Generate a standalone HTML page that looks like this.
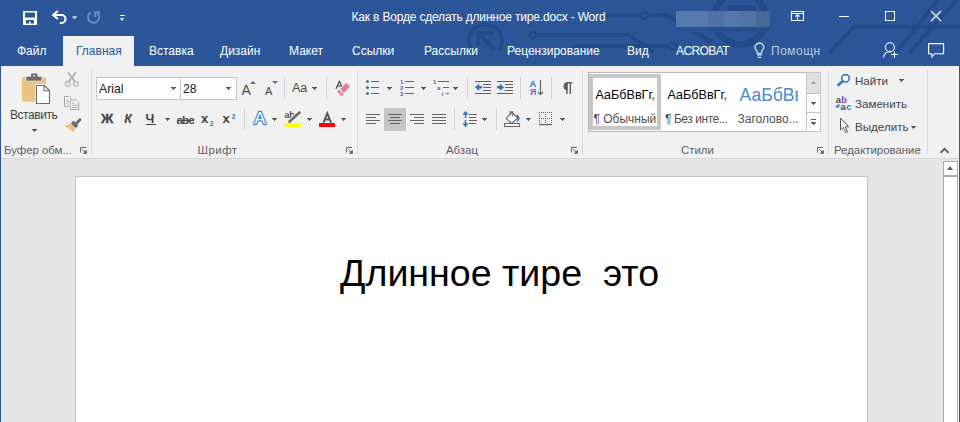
<!DOCTYPE html>
<html><head><meta charset="utf-8">
<style>
*{margin:0;padding:0;box-sizing:border-box}
html,body{width:960px;height:422px;overflow:hidden;background:#e6e6e6;font-family:"Liberation Sans",sans-serif}
.a{position:absolute;white-space:nowrap}
#title{position:absolute;left:0;top:0;width:960px;height:66px;background:#2b579a;overflow:hidden}
.tab{position:absolute;top:44px;font-size:12px;color:#fff;line-height:14px}
#ribbon{position:absolute;left:0;top:66px;width:960px;height:93px;background:#f1f1f1;border-bottom:1px solid #d6d6d6}
.sep{position:absolute;width:1px;background:#dadada}
.gl{position:absolute;top:144px;font-size:11.4px;color:#5e5e5e;line-height:13px}
.lbl{position:absolute;font-size:11.5px;color:#444;line-height:13px}
.dd{position:absolute;width:5px;height:3px;background:linear-gradient(#5a5a5a,#5a5a5a) 0 0/5px 1px no-repeat,linear-gradient(#5a5a5a,#5a5a5a) 1px 1px/3px 1px no-repeat,linear-gradient(#5a5a5a,#5a5a5a) 2px 2px/1px 1px no-repeat}
#doc{position:absolute;left:1px;top:159px;width:958px;height:263px;background:#e6e6e6}
#page{position:absolute;left:75px;top:176px;width:793px;height:260px;background:#fff;border:1px solid #c3c3c3}
</style></head><body>
<div id="title">
<svg class="a" style="left:0;top:0" width="960" height="66" viewBox="0 0 960 66">
 <defs><clipPath id="cp"><rect x="0" y="0" width="960" height="53"/></clipPath></defs>
 <g fill="none" stroke="#234b8a" stroke-width="4" clip-path="url(#cp)">
  <path d="M472 50.5A16.5 16.5 0 1 1 498.5 51"/>
  <path d="M478.2 45.8V33.2H493.5 M478.2 33.2L495 49.5" stroke-width="4.3"/>
  <path d="M536 35H629L654 53"/>
  <circle cx="533" cy="35" r="3.2" stroke-width="2.6"/>
  <path d="M605 15.6H641 M648 15.6H668L712 42"/>
  <circle cx="644.5" cy="15.6" r="3.3" stroke-width="2.6"/>
  <path d="M660 15H665L712 43"/>
  <path d="M566 53L576 46.2H669"/>
  <circle cx="673" cy="46.2" r="3.5" stroke-width="2.6"/>
  <circle cx="740" cy="18.5" r="26" stroke-width="6.5"/>
  <path d="M728 8H756" stroke-width="6"/>
  <path d="M960 26.6H854L829 53"/>
  <path d="M938 0L896 53 M957 0L909 53"/>
 </g>
</svg>
<!-- save -->
<svg class="a" style="left:22px;top:10px" width="16" height="16" viewBox="0 0 16 16">
 <path fill="#fff" fill-rule="evenodd" d="M1 1H15V15H1Z M3 2.5H13V7.5H3Z M4 10H12V13.5H8.5V11.5H7V13.5H4Z"/>
</svg>
<!-- undo -->
<svg class="a" style="left:48px;top:6px" width="34" height="22" viewBox="48 6 34 22">
 <path d="M55 15H61.5A4 4 0 0 1 61.5 23H59.8" fill="none" stroke="#fff" stroke-width="2"/>
 <path d="M57.8 11L53.2 15L57.8 19" fill="none" stroke="#fff" stroke-width="2.2"/>
 <path d="M72 16.5H77L74.5 19Z" fill="#fff"/>
</svg>
<!-- redo disabled -->
<svg class="a" style="left:84px;top:6px" width="20" height="22" viewBox="84 6 20 22">
 <path d="M97.5 13.2A5.6 5.6 0 1 1 91 12.2" fill="none" stroke="#6b8cc2" stroke-width="2"/>
 <path d="M95.3 17V12.3H100.3" fill="none" stroke="#6b8cc2" stroke-width="2"/>
</svg>
<!-- customize -->
<div class="a" style="left:120px;top:15px;width:5px;height:1px;background:#fff"></div>
<div class="a" style="left:120px;top:18px;width:0;height:0;border-left:2.5px solid transparent;border-right:2.5px solid transparent;border-top:3px solid #fff"></div>
<div class="a" style="left:351.5px;top:9.7px;font-size:12px;letter-spacing:-0.18px;color:#fff;line-height:14px">Как в Ворде сделать длинное тире.docx - Word</div>
<!-- blurred username -->
<div class="a" style="left:676px;top:11px;width:16px;height:16px;background:#587aae"></div>
<div class="a" style="left:676px;top:27px;width:16px;height:5px;background:#2a5393"></div>
<div class="a" style="left:692px;top:11px;width:16px;height:16px;background:#5779ad"></div>
<div class="a" style="left:692px;top:27px;width:16px;height:5px;background:#2a5597"></div>
<div class="a" style="left:708px;top:11px;width:16px;height:16px;background:#5272a7"></div>
<div class="a" style="left:708px;top:27px;width:16px;height:5px;background:#27508f"></div>
<div class="a" style="left:724px;top:11px;width:16px;height:16px;background:#5677ac"></div>
<div class="a" style="left:724px;top:27px;width:16px;height:5px;background:#27508f"></div>
<div class="a" style="left:740px;top:11px;width:16px;height:16px;background:#5273a6"></div>
<div class="a" style="left:740px;top:27px;width:16px;height:5px;background:#27508f"></div>
<div class="a" style="left:756px;top:11px;width:14px;height:16px;background:#486899"></div>
<div class="a" style="left:756px;top:27px;width:14px;height:5px;background:#27508f"></div>
<!-- ribbon display options -->
<svg class="a" style="left:788px;top:8px" width="20" height="16" viewBox="788 8 20 16">
 <path d="M791.5 11.5H803.5V20.5H791.5Z M791.5 13.5H803.5 M797.5 14V20.5 M795.3 16.7L797.5 14.5L799.7 16.7" fill="none" stroke="#fff" stroke-width="1.1"/>
</svg>
<div class="a" style="left:839px;top:16px;width:10px;height:1px;background:#fff"></div>
<div class="a" style="left:885px;top:11px;width:10px;height:10px;border:1px solid #fff"></div>
<svg class="a" style="left:930px;top:10px" width="12" height="12" viewBox="0 0 12 12">
 <path d="M1 1L11 11M11 1L1 11" stroke="#fff" stroke-width="1.1"/>
</svg>
<!-- tabs -->
<div class="a" style="left:63px;top:36px;width:71px;height:30px;background:#f1f1f1"></div>
<div class="tab" style="left:17px">Файл</div>
<div class="tab" style="left:76px;color:#2b579a">Главная</div>
<div class="tab" style="left:149px">Вставка</div>
<div class="tab" style="left:220px">Дизайн</div>
<div class="tab" style="left:289px">Макет</div>
<div class="tab" style="left:352px">Ссылки</div>
<div class="tab" style="left:424px">Рассылки</div>
<div class="tab" style="left:507px">Рецензирование</div>
<div class="tab" style="left:627px">Вид</div>
<div class="tab" style="left:676px;letter-spacing:-0.6px">ACROBAT</div>
<svg class="a" style="left:750px;top:41px" width="20" height="20" viewBox="750 40 20 20">
 <path d="M757.3 52.5V51C757.3 49.5 755 48.5 755 46.5A4.4 4.4 0 0 1 763.8 46.5C763.8 48.5 761.5 49.5 761.5 51V52.5Z" fill="none" stroke="#fff" stroke-width="1.1"/>
 <path d="M757 54H761.8 M757.6 56.2H761.2" stroke="#fff" stroke-width="1.1"/>
</svg>
<div class="tab" style="left:771px;color:#bccbe2;letter-spacing:0.5px">Помощн</div>
<!-- share -->
<svg class="a" style="left:878px;top:38px" width="70" height="24" viewBox="878 38 70 24">
 <circle cx="889.9" cy="47.2" r="4.5" fill="none" stroke="#fff" stroke-width="1.1"/>
 <path d="M883.4 57.5C884 54 886.5 51.8 890 51.8C890.5 51.8 891 51.85 891.5 51.95" fill="none" stroke="#fff" stroke-width="1.1"/>
 <path d="M894.5 51.5V57.8 M891.3 54.5H897.8" stroke="#fff" stroke-width="1.1"/>
 <!-- comments -->
 <path d="M928.6 43.6H943.6V53.8H934.5L931.6 56.8V53.8H928.6Z" fill="none" stroke="#fff" stroke-width="1.1"/>
</svg>
</div>
<div id="ribbon"></div>
<!-- separators -->
<div class="sep" style="left:91px;top:70px;height:84px"></div>
<div class="sep" style="left:357px;top:70px;height:84px"></div>
<div class="sep" style="left:582px;top:70px;height:84px"></div>
<div class="sep" style="left:828px;top:70px;height:84px"></div>
<div class="sep" style="left:927px;top:70px;height:84px"></div>
<!-- group labels -->
<div class="gl" style="left:4px">Буфер обм...</div>
<div class="gl" style="left:197.5px;letter-spacing:0.5px">Шрифт</div>
<div class="gl" style="left:446px">Абзац</div>
<div class="gl" style="left:681px">Стили</div>
<div class="gl" style="left:834px">Редактирование</div>
<svg class="a" style="left:79px;top:146px" width="9" height="9" viewBox="0 0 9 9"><path d="M1.5 6.5V1.5H7" fill="none" stroke="#666" stroke-width="1"/><path d="M7.8 3.8V7.8H3.8Z" fill="#555"/><path d="M3.5 3.5L6 6" stroke="#555" stroke-width="1"/></svg>
<svg class="a" style="left:345px;top:146px" width="9" height="9" viewBox="0 0 9 9"><path d="M1.5 6.5V1.5H7" fill="none" stroke="#666" stroke-width="1"/><path d="M7.8 3.8V7.8H3.8Z" fill="#555"/><path d="M3.5 3.5L6 6" stroke="#555" stroke-width="1"/></svg>
<svg class="a" style="left:570px;top:146px" width="9" height="9" viewBox="0 0 9 9"><path d="M1.5 6.5V1.5H7" fill="none" stroke="#666" stroke-width="1"/><path d="M7.8 3.8V7.8H3.8Z" fill="#555"/><path d="M3.5 3.5L6 6" stroke="#555" stroke-width="1"/></svg>
<svg class="a" style="left:816px;top:146px" width="9" height="9" viewBox="0 0 9 9"><path d="M1.5 6.5V1.5H7" fill="none" stroke="#666" stroke-width="1"/><path d="M7.8 3.8V7.8H3.8Z" fill="#555"/><path d="M3.5 3.5L6 6" stroke="#555" stroke-width="1"/></svg>
<svg class="a" style="left:938px;top:145.7px" width="12" height="9" viewBox="0 0 12 9"><path d="M2.6 6.8L6.5 2.9L10.4 6.8" fill="none" stroke="#606060" stroke-width="2"/></svg>

<!-- CLIPBOARD -->
<svg class="a" style="left:18px;top:70px" width="36" height="37" viewBox="18 70 36 37">
 <path d="M22 78A1 1 0 0 1 23 77H45A1 1 0 0 1 46 78V101.7H24.5A2.5 2.5 0 0 1 22 99.2Z" fill="#ebc47e"/>
 <path d="M26 76.2H42V80A1.2 1.2 0 0 1 40.8 81.2H27.2A1.2 1.2 0 0 1 26 80Z" fill="#6d6d6d" stroke="#f1f1f1" stroke-width="0.8"/>
 <path d="M31 74.2A1 1 0 0 1 32 73.6H36.4A1 1 0 0 1 37.4 74.2V77H31Z" fill="#6d6d6d"/>
 <rect x="33.4" y="75" width="1.6" height="1.6" fill="#f1f1f1"/>
 <path d="M36.3 85.3H44.3L49.7 90.5V103.7H36.3Z" fill="#fff" stroke="#f1f1f1" stroke-width="2.6"/>
 <path d="M36.5 85.5H44.3L49.5 90.6V103.5H36.5Z M44 85.8V90.8H49.2" fill="#fff" stroke="#6d6d6d" stroke-width="1.1" stroke-linejoin="miter"/>
</svg>
<div class="lbl" style="left:10px;top:109.3px;font-size:12px;letter-spacing:-0.45px">Вставить</div>
<div class="dd" style="left:32px;top:129px"></div>
<!-- cut -->
<svg class="a" style="left:62px;top:70px" width="20" height="19" viewBox="62 70 20 19">
 <g fill="none" stroke="#b3b3b3">
  <circle cx="67.7" cy="83.8" r="2.4" stroke-width="1.2"/><circle cx="76" cy="83.8" r="2.4" stroke-width="1.2"/>
  <path d="M68.8 81.6L75.8 72.3 M74.9 81.6L67.9 72.3" stroke-width="1.9"/>
 </g>
</svg>
<!-- copy -->
<svg class="a" style="left:62px;top:94px" width="20" height="18" viewBox="62 94 20 18">
 <path d="M64.5 96.5H69.5L71.5 98.5V106.5H64.5Z" fill="#fff" stroke="#a3a3a3" stroke-width="1"/>
 <path d="M70.5 100H76L78.5 102.5V109.5H70.5Z" fill="#fff" stroke="#f1f1f1" stroke-width="2"/>
 <path d="M70.5 100H76L78.5 102.5V109.5H70.5Z" fill="#fff" stroke="#a3a3a3" stroke-width="1"/>
 <path d="M66 99.5H68.5 M66 101.8H69.5 M66 104H69 M72 103H75 M72 105.3H77 M72 107.5H77" stroke="#a3a3a3" stroke-width="1"/>
</svg>
<!-- format painter -->
<svg class="a" style="left:62px;top:116px" width="20" height="18" viewBox="62 116 20 18">
 <path d="M80 119.8L77 122.8" stroke="#6d6d6d" stroke-width="2.8" stroke-linecap="round"/>
 <path d="M78.4 125.4L73.6 120.6L70.8 123.4L75.6 128.2Z" fill="#6d6d6d"/>
 <path d="M70.4 123.8L75.2 128.6L73.4 132.3L64.2 125.4Z" fill="#ebc47e"/>
</svg>
<!-- FONT -->
<div class="a" style="left:96px;top:77px;width:141px;height:23px;background:#fff;border:1px solid #c6c6c6"></div>
<div class="a" style="left:180px;top:77px;width:1px;height:23px;background:#c6c6c6"></div>
<div class="lbl" style="left:99px;top:83px;font-size:12.2px;color:#222">Arial</div>
<div class="dd" style="left:171px;top:87px"></div>
<div class="lbl" style="left:183px;top:83px;font-size:12.2px;color:#222">28</div>
<div class="dd" style="left:226px;top:87px"></div>
<div class="sep" style="left:284px;top:77px;height:22px;background:#d4d4d4"></div>
<div class="sep" style="left:326px;top:77px;height:22px;background:#d4d4d4"></div>
<div class="lbl" style="left:241.5px;top:83.5px;font-size:14px;color:#4a4a4a">A</div>
<div class="a" style="left:250px;top:81px;width:0;height:0;border-left:3px solid transparent;border-right:3px solid transparent;border-bottom:3px solid #2e75b6"></div>
<div class="lbl" style="left:265px;top:84.5px;font-size:11px;color:#4a4a4a">A</div>
<div class="a" style="left:272px;top:81px;width:0;height:0;border-left:3px solid transparent;border-right:3px solid transparent;border-top:3px solid #2e75b6"></div>
<div class="lbl" style="left:292px;top:82px;font-size:12.5px;color:#4a4a4a">Aa</div>
<div class="dd" style="left:312px;top:87px"></div>
<svg class="a" style="left:330px;top:76px" width="26" height="22" viewBox="330 76 26 22">
 <path d="M336 88.8L339.4 81.3L342 86.5 M337.5 86H341" fill="none" stroke="#3a3a3a" stroke-width="1.1"/>
 <path d="M346.2 82.6L350.3 86.7L343.8 93.2L339.7 89.1Z" fill="#e57e92" stroke="#f1f1f1" stroke-width="0.8"/>
 <path d="M338.8 89.8L343.6 94.6L341.9 96.2L337.1 91.4Z" fill="#e57e92"/>
</svg>

<div class="lbl" style="left:100.9px;top:111.8px;font-size:13.6px;font-weight:bold;color:#444;-webkit-text-stroke:0.3px #444">Ж</div>
<div class="lbl" style="left:124.3px;top:112.5px;font-size:12.5px;font-weight:bold;font-style:italic;color:#444">К</div>
<div class="lbl" style="left:145.5px;top:112.5px;font-size:12.5px;font-weight:bold;color:#444">Ч</div>
<div class="a" style="left:146px;top:124px;width:10px;height:1px;background:#444"></div>
<div class="dd" style="left:165px;top:118px"></div>
<div class="lbl" style="left:176.5px;top:112.5px;font-size:11.6px;font-weight:bold;color:#4a4a4a;letter-spacing:-0.9px">abc</div>
<div class="a" style="left:177px;top:119.5px;width:17px;height:1.2px;background:#4a4a4a"></div>
<div class="lbl" style="left:201px;top:112px;font-size:13px;font-weight:bold;color:#444">x</div>
<div class="lbl" style="left:209.8px;top:116.8px;font-size:6.5px;font-weight:bold;color:#2e75b6">2</div>
<div class="lbl" style="left:222.5px;top:112px;font-size:13px;font-weight:bold;color:#444">x</div>
<div class="lbl" style="left:231.8px;top:109.5px;font-size:6.5px;font-weight:bold;color:#2e75b6">2</div>
<div class="sep" style="left:244px;top:108px;height:22px;background:#d4d4d4"></div>
<svg class="a" style="left:248px;top:106px" width="92" height="24" viewBox="248 106 92 24">
 <text x="254.2" y="124.3" font-family="Liberation Sans" font-size="16.8" fill="#fff" stroke="#c5d8ef" stroke-width="3.6" paint-order="stroke" stroke-linejoin="round">A</text>
 <text x="254.2" y="124.3" font-family="Liberation Sans" font-size="16.8" fill="#fff" stroke="#3f7cc6" stroke-width="2" paint-order="stroke" stroke-linejoin="round">A</text>
 <text x="284.6" y="117.6" font-family="Liberation Sans" font-weight="bold" font-size="9" fill="#505050" letter-spacing="-0.3">ab</text>
 <path d="M289.5 121.5L299.5 112.5" stroke="#f1f1f1" stroke-width="4.5"/>
 <path d="M289.5 121.5L299.5 112.5" stroke="#6a6a6a" stroke-width="2.6" stroke-linecap="round"/>
 <path d="M288 123L290 120.5L291 121.6Z" fill="#6a6a6a"/>
 <rect x="285" y="123" width="16" height="4" fill="#ffff00"/>
 <path d="M323.5 122.7L327.3 113.3L331.1 122.7 M324.8 119.5H329.8" fill="none" stroke="#555" stroke-width="1.9"/>
 <rect x="319" y="123" width="16" height="4" fill="#f00"/>
</svg>
<div class="dd" style="left:272px;top:118px"></div>
<div class="dd" style="left:307px;top:118px"></div>
<div class="dd" style="left:341px;top:118px"></div>


<!-- PARAGRAPH -->
<svg class="a" style="left:364px;top:78px" width="100" height="20" viewBox="364 78 100 20">
 <g fill="#2e75b6">
  <circle cx="367.5" cy="81.5" r="1.5"/><circle cx="367.5" cy="87.5" r="1.5"/><circle cx="367.5" cy="93.5" r="1.5"/>
 </g>
 <path d="M371 81.5H379 M371 87.5H379 M371 93.5H379" stroke="#636363" stroke-width="1.2"/>
 <g font-family="Liberation Sans" font-weight="bold" font-size="6" fill="#2e75b6">
  <text x="400" y="84">1</text><text x="400" y="90">2</text><text x="400" y="96">3</text>
  <text x="433" y="84">1</text><text x="437" y="90">a</text><text x="441.5" y="96">i</text>
 </g>
 <path d="M405 81.5H414 M405 87.5H414 M405 93.5H414 M438 81.5H449 M443 87.5H449 M446 93.5H449" stroke="#636363" stroke-width="1.2"/>
</svg>
<div class="dd" style="left:387px;top:87px"></div>
<div class="dd" style="left:421px;top:87px"></div>
<div class="dd" style="left:453px;top:87px"></div>
<div class="sep" style="left:467px;top:77px;height:22px;background:#d4d4d4"></div>
<svg class="a" style="left:472px;top:78px" width="110" height="20" viewBox="472 78 110 20">
 <path d="M475 81.5H491 M483 84.5H491 M483 87.5H491 M483 90.5H491 M475 93.5H491 M497 81.5H513 M505 84.5H513 M505 87.5H513 M505 90.5H513 M497 93.5H513" stroke="#5f5f5f" stroke-width="1.1"/>
 <path d="M478.5 87.2H482 M497 87.2H500.5" stroke="#3474bc" stroke-width="2.6"/>
 <path d="M475 87.2L479.2 83.5V91Z M504 87.2L499.8 83.5V91Z" fill="#3474bc"/>
 <text x="529.6" y="86.8" font-family="Liberation Sans" font-weight="bold" font-size="9.3" fill="#3474bc">A</text>
 <text x="530" y="94.8" font-family="Liberation Sans" font-weight="bold" font-size="8.8" fill="#8a5cbf">Я</text>
 <path d="M540.5 80V94.5 M538 92L540.5 94.5L543 92" fill="none" stroke="#5f5f5f" stroke-width="1.1"/>
 <path d="M566.3 82.7H572.2 M567 82.7V94 M570.3 82.7V94" fill="none" stroke="#5f5f5f" stroke-width="1.4"/>
 <path d="M567.5 82.2A4 4 0 0 0 567.5 90.2Z" fill="#5f5f5f"/>
</svg>
<div class="sep" style="left:520px;top:77px;height:22px;background:#d4d4d4"></div>
<div class="sep" style="left:551px;top:77px;height:22px;background:#d4d4d4"></div>
<!-- row 2 -->
<div class="a" style="left:384px;top:108px;width:22px;height:23px;background:#c5c5c5"></div>
<svg class="a" style="left:364px;top:108px" width="120" height="22" viewBox="364 108 120 22">
 <path d="M366 114.5H380 M366 117.5H376 M366 120.5H380 M366 123.5H376
          M388 114.5H402 M390 117.5H400 M388 120.5H402 M390 123.5H400
          M410 114.5H424 M414 117.5H424 M410 120.5H424 M414 123.5H424
          M432 114.5H446 M432 117.5H446 M432 120.5H446 M432 123.5H446
          M469 114.5H477 M469 117.5H476 M469 120.5H477 M469 123.5H476" stroke="#636363" stroke-width="1.2"/>
 <path d="M465.5 114V118 M465.5 120V124.5" stroke="#3474bc" stroke-width="1.5"/>
 <path d="M465.5 110.8L468.6 114.8H462.4Z M465.5 127.2L468.6 123.2H462.4Z" fill="#3474bc"/>
</svg>
<div class="dd" style="left:482px;top:118px"></div>
<div class="sep" style="left:454px;top:108px;height:22px;background:#d4d4d4"></div>
<div class="sep" style="left:496px;top:108px;height:22px;background:#d4d4d4"></div>
<svg class="a" style="left:500px;top:106px" width="24" height="26" viewBox="500 106 24 26">
 <path d="M506.2 118.3L512 112.5L517.9 118L511.5 123.5Z" fill="#fff" stroke="#6a6a6a" stroke-width="1.1" stroke-linejoin="round"/>
 <path d="M510 114.5V111.7H512.8V116.5" fill="none" stroke="#6a6a6a" stroke-width="1.1"/>
 <path d="M516.8 114.8C519.5 115.5 521 118.5 517.6 122.5L516.8 122C518 119.5 517.8 117.5 516.3 116.2Z" fill="#3474bc"/>
 <rect x="504.5" y="123.5" width="15" height="3" fill="#fff" stroke="#6a6a6a" stroke-width="1.1"/>
</svg>
<div class="dd" style="left:526px;top:118px"></div>
<svg class="a" style="left:536px;top:108px" width="20" height="20" viewBox="536 108 20 20"><g fill="#5f5f5f"><rect x="539" y="112" width="1" height="1"/><rect x="539" y="118" width="1" height="1"/><rect x="541" y="112" width="1" height="1"/><rect x="541" y="118" width="1" height="1"/><rect x="543" y="112" width="1" height="1"/><rect x="543" y="118" width="1" height="1"/><rect x="545" y="112" width="1" height="1"/><rect x="545" y="118" width="1" height="1"/><rect x="547" y="112" width="1" height="1"/><rect x="547" y="118" width="1" height="1"/><rect x="549" y="112" width="1" height="1"/><rect x="549" y="118" width="1" height="1"/><rect x="551" y="112" width="1" height="1"/><rect x="551" y="118" width="1" height="1"/><rect x="539" y="114" width="1" height="1"/><rect x="539" y="116" width="1" height="1"/><rect x="539" y="120" width="1" height="1"/><rect x="539" y="122" width="1" height="1"/><rect x="545" y="114" width="1" height="1"/><rect x="545" y="116" width="1" height="1"/><rect x="545" y="120" width="1" height="1"/><rect x="545" y="122" width="1" height="1"/><rect x="551" y="114" width="1" height="1"/><rect x="551" y="116" width="1" height="1"/><rect x="551" y="120" width="1" height="1"/><rect x="551" y="122" width="1" height="1"/></g><rect x="539" y="124" width="13" height="1.2" fill="#5f5f5f"/></svg>
<div class="dd" style="left:560px;top:118px"></div>

<!-- STYLES -->
<div class="a" style="left:588px;top:72px;width:233px;height:60px;background:#fff;border:1px solid #bababa"></div>
<div class="a" style="left:589px;top:74px;width:72px;height:56px;border:4px solid #c6c6c6"></div>
<div class="lbl" style="left:595.5px;top:88.5px;font-size:12.6px;color:#000">АаБбВвГг<span style="color:#6e0a0a">,</span></div>
<div class="lbl" style="left:593.5px;top:113px;font-size:12px;color:#505050">¶ Обычный</div>
<div class="lbl" style="left:667.5px;top:88.5px;font-size:12.6px;color:#000">АаБбВвГг<span style="color:#6e0a0a">,</span></div>
<div class="lbl" style="left:665px;top:113px;font-size:12px;letter-spacing:-0.45px;color:#505050">¶ Без инте...</div>
<div class="a" style="left:739px;top:82px;width:59px;height:22px;overflow:hidden"><span class="lbl" style="left:0.5px;top:3px;font-size:17.6px;line-height:20px;color:#4a8ad2">АаБбВв</span></div>
<div class="lbl" style="left:737.5px;top:113px;font-size:12px;color:#505050">Заголово...</div>
<div class="a" style="left:806px;top:72px;width:15px;height:60px;background:#fff;border:1px solid #c6c6c6"></div>
<div class="a" style="left:807px;top:73px;width:13px;height:20px;background:#e0e0e0"></div>
<div class="a" style="left:806px;top:93px;width:15px;height:1px;background:#c6c6c6"></div>
<div class="a" style="left:806px;top:112px;width:15px;height:1px;background:#c6c6c6"></div>
<div class="dd" style="left:811px;top:81px;transform:rotate(180deg);filter:opacity(0.45)"></div>
<div class="dd" style="left:811px;top:102px"></div>
<div class="a" style="left:811px;top:119px;width:5px;height:1px;background:#5a5a5a"></div>
<div class="dd" style="left:811px;top:122px"></div>

<!-- EDITING -->
<svg class="a" style="left:834px;top:72px" width="18" height="16" viewBox="834 72 18 16">
 <circle cx="845.5" cy="78.3" r="3.7" fill="#fff" stroke="#3a78c0" stroke-width="1.7"/>
 <path d="M842.6 81.3L838.3 85" stroke="#3a78c0" stroke-width="2.6" stroke-linecap="round"/>
</svg>
<div class="lbl" style="left:855px;top:74px;font-size:11.6px">Найти</div>
<div class="dd" style="left:899px;top:79px"></div>
<svg class="a" style="left:834px;top:94px" width="20" height="17" viewBox="0 0 20 17">
 <text x="1.8" y="8.6" font-family="Liberation Sans" font-weight="bold" font-size="9.4" fill="#4a4a4a">a</text>
 <text x="7.2" y="8.6" font-family="Liberation Sans" font-weight="bold" font-size="9.4" fill="#8a4cb8">b</text>
 <text x="6.6" y="15.9" font-family="Liberation Sans" font-weight="bold" font-size="9.4" fill="#4a4a4a">a</text>
 <text x="12.2" y="15.9" font-family="Liberation Sans" font-weight="bold" font-size="9.4" fill="#3474bc">c</text>
 <path d="M4.8 10V12.5H2.5 M3.8 11.2L2.3 12.5L3.8 13.8" fill="none" stroke="#3474bc" stroke-width="1.1"/>
</svg>
<div class="lbl" style="left:855px;top:96.5px;font-size:11.6px">Заменить</div>
<svg class="a" style="left:839px;top:117px" width="12" height="17" viewBox="0 0 12 17">
 <path d="M1.5 1V13L4.3 10.5L6.8 15.5L8.6 14.7L6.2 9.8H9.8Z" fill="#fff" stroke="#555" stroke-width="1"/>
</svg>
<div class="lbl" style="left:855px;top:120px;font-size:11.6px">Выделить</div>
<div class="dd" style="left:911px;top:126px"></div>

<div id="page"></div>
<div class="a" style="left:340px;top:252px;font-size:37.6px;line-height:43px;color:#000">Длинное тире&nbsp; это</div>
<!-- scrollbar -->
<div class="a" style="left:943px;top:161px;width:15px;height:261px;background:#fff;border:1px solid #ababab;border-bottom:none"></div>
<div class="a" style="left:943px;top:175px;width:15px;height:2px;background:#ababab"></div>
<div class="a" style="left:947px;top:166px;width:0;height:0;border-left:3.5px solid transparent;border-right:3.5px solid transparent;border-bottom:4px solid #5f5f5f"></div>
<div class="a" style="left:958px;top:159px;width:1px;height:263px;background:#f4f4f4"></div>
<div class="a" style="left:1px;top:159px;width:1px;height:263px;background:#ececec"></div>
<div class="a" style="left:0;top:66px;width:1px;height:356px;background:#2b579a"></div>
<div class="a" style="left:959px;top:66px;width:1px;height:356px;background:#2b579a"></div>
</body></html>
